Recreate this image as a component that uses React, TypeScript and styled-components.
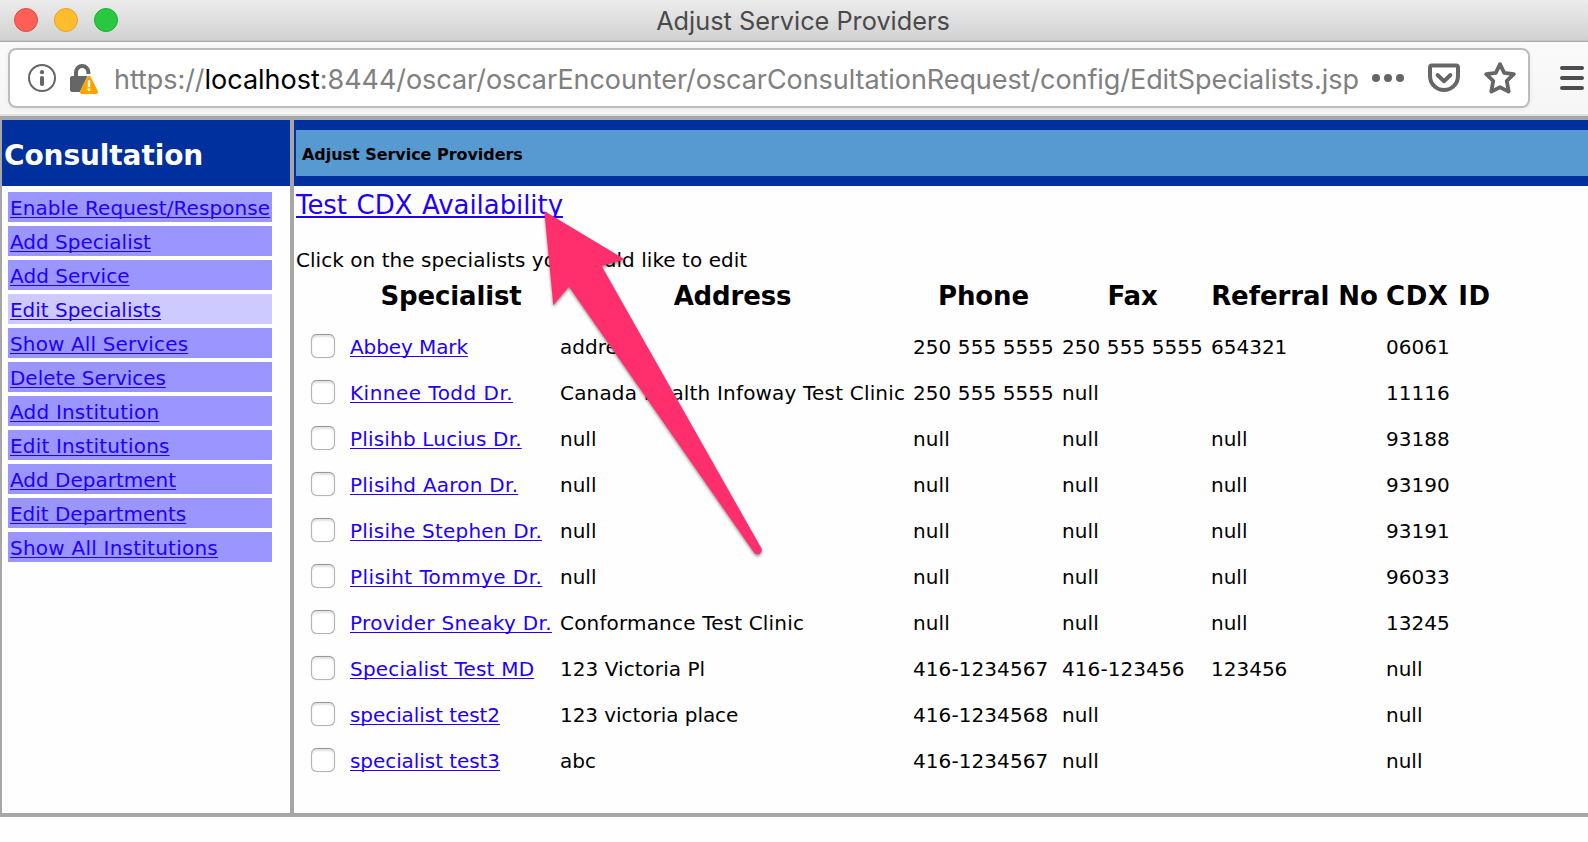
import React from "react";
import styled, { createGlobalStyle } from "styled-components";

const GlobalStyle = createGlobalStyle`
  * { box-sizing: border-box; }
  body {
    margin: 0;
    background: #fefefe;
    overflow: hidden;
    font-family: Verdana, "DejaVu Sans", sans-serif;
  }
`;

const Window = styled.div`
  position: relative;
  width: 1588px;
  height: 842px;
  overflow: hidden;
  display: flex;
  flex-direction: column;
  color: #000;
`;

const TitleBar = styled.header`
  height: 42px;
  flex: none;
  display: grid;
  grid-template-columns: 1fr auto 1fr;
  align-items: center;
  padding: 0 0 0 14px;
  background: linear-gradient(#ececec, #d1d1d1);
  border-bottom: 1px solid #acacac;
  box-shadow: inset 0 -1px #c4c4c4;
`;

const Lights = styled.div`
  display: flex;
  gap: 16px;
  margin-bottom: 1px;
`;

const Light = styled.span<{ $fill: string; $edge: string }>`
  width: 24px;
  height: 24px;
  border-radius: 50%;
  background: ${(p) => p.$fill};
  border: 1px solid ${(p) => p.$edge};
`;

const WindowTitle = styled.h1`
  margin: 1px 0 0 4px;
  font: 400 25.3px/40px Inter, sans-serif;
  color: #4a4a4a;
`;

const Toolbar = styled.div`
  height: 74px;
  flex: none;
  display: flex;
  align-items: flex-start;
  padding: 6px 4px 0 8px;
  background: linear-gradient(#fafafa, #f6f6f6);
  border-bottom: 2px solid #e0e0e0;
`;

const AddressBox = styled.div`
  width: 1522px;
  height: 60px;
  flex: none;
  display: flex;
  align-items: center;
  padding: 0 12px 0 18px;
  background: #fff;
  border: 2px solid #bcbcbc;
  border-radius: 8px;
  box-shadow: 0 1px 5px rgba(0, 0, 0, 0.06);
`;

const Url = styled.div`
  margin-left: 16px;
  padding-top: 3px;
  width: 1258px;
  flex: none;
  white-space: nowrap;
  font: 400 27px/53px Inter, sans-serif;
  letter-spacing: -0.065px;
  color: #808080;
`;

const Host = styled.span`
  color: #000;
  letter-spacing: 0;
`;

const Icon = styled.svg<{ $gap?: number }>`
  flex: none;
  display: block;
  margin-left: ${(p) => p.$gap ?? 0}px;
`;

const Page = styled.main`
  height: 701px;
  flex: none;
  display: grid;
  grid-template-columns: 288px 1fr;
  grid-template-rows: 66px 1fr;
  column-gap: 4px;
  border: solid #a6a6a6;
  border-width: 4px 0 4px 2px;
  background: linear-gradient(#a6a6a6, #a6a6a6) 288px 0 / 4px 100% no-repeat;
`;

const Brand = styled.div`
  padding: 0 0 0 2px;
  background: #002f9e;
  color: #fff;
  font-size: 28px;
  font-weight: bold;
  line-height: 71px;
  height: 66px;
  letter-spacing: -0.1px;
`;

const TopCell = styled.div`
  padding: 10px 0 10px 2px;
  background: #002f9e;
`;

const TopBar = styled.div`
  height: 46px;
  padding-left: 6px;
  background: #5799d1;
  font-size: 16px;
  font-weight: bold;
  line-height: 49px;
  letter-spacing: -0.04px;
`;

const Nav = styled.nav`
  display: flex;
  flex-direction: column;
  gap: 4px;
  padding: 6px 18px 0 6px;
`;

const NavItem = styled.div<{ $current?: boolean }>`
  height: 30px;
  padding-left: 2px;
  line-height: 32px;
  background: ${(p) => (p.$current ? "#cdcaff" : "#9a95ff")};
`;

const Link = styled.a<{ $track?: number; $large?: boolean }>`
  font-size: ${(p) => (p.$large ? 26 : 20)}px;
  letter-spacing: ${(p) => p.$track ?? 0}px;
  word-spacing: ${(p) => (p.$large ? 1.5 : 0)}px;
  white-space: nowrap;
  color: #1f00fc;
  text-decoration: underline;
  text-decoration-thickness: ${(p) => (p.$large ? 2 : 1)}px;
  text-underline-offset: 2px;
  text-decoration-skip-ink: none;
`;

const Content = styled.section`
  padding-left: 2px;
`;

const TestLine = styled.div`
  height: 38px;
  line-height: 38px;
`;

const Hint = styled.p`
  margin: 21px 0 1px;
  font-size: 20px;
  line-height: 30px;
  letter-spacing: 0.04px;
`;

const Row = styled.div`
  display: grid;
  grid-template-columns: 54px 210px 353px 149px 149px 175px 106px;
  height: 46px;
  align-items: center;
`;

const HeadRow = styled(Row)`
  height: 40px;
  margin-bottom: 7px;
`;

const HeadCell = styled.div<{ $track?: number }>`
  padding-right: 8px;
  text-align: center;
  white-space: nowrap;
  font-size: 26px;
  font-weight: bold;
  line-height: 40px;
  letter-spacing: ${(p) => p.$track ?? -0.15}px;
`;

const Cell = styled.div<{ $track?: number }>`
  height: 46px;
  font-size: 20px;
  line-height: 48px;
  white-space: nowrap;
  letter-spacing: ${(p) => p.$track ?? 0}px;
`;

const Check = styled.input`
  appearance: none;
  display: block;
  width: 24px;
  height: 24px;
  margin: 0 0 0 15px;
  border: 1px solid #b4b4b4;
  border-top-color: #979797;
  border-radius: 6px;
  background: #fff;
  box-shadow: inset 0 2px 2px rgba(0, 0, 0, 0.12), 0 0 1px rgba(0, 0, 0, 0.25);
`;

const Pointer = styled.svg`
  position: absolute;
  left: 530px;
  top: 200px;
  filter: drop-shadow(0 2px 1.5px rgba(0, 0, 0, 0.4));
`;

const nav: [string, number][] = [
  ["Enable Request/Response", 0.07],
  ["Add Specialist", 0],
  ["Add Service", 0.05],
  ["Edit Specialists", -0.02],
  ["Show All Services", 0.14],
  ["Delete Services", -0.04],
  ["Add Institution", 0.2],
  ["Edit Institutions", 0.17],
  ["Add Department", 0],
  ["Edit Departments", -0.02],
  ["Show All Institutions", 0.23],
];

interface Specialist {
  name: string;
  track: number;
  address: string;
  addressTrack?: number;
  phone: string;
  fax: string;
  referral: string;
  cdx: string;
}

const specialists: Specialist[] = [
  { name: "Abbey Mark", track: -0.1, address: "address", phone: "250 555 5555", fax: "250 555 5555", referral: "654321", cdx: "06061" },
  { name: "Kinnee Todd Dr.", track: 0.48, address: "Canada Health Infoway Test Clinic", addressTrack: 0.18, phone: "250 555 5555", fax: "null", referral: "", cdx: "11116" },
  { name: "Plisihb Lucius Dr.", track: 0.18, address: "null", phone: "null", fax: "null", referral: "null", cdx: "93188" },
  { name: "Plisihd Aaron Dr.", track: 0.25, address: "null", phone: "null", fax: "null", referral: "null", cdx: "93190" },
  { name: "Plisihe Stephen Dr.", track: 0.2, address: "null", phone: "null", fax: "null", referral: "null", cdx: "93191" },
  { name: "Plisiht Tommye Dr.", track: 0.42, address: "null", phone: "null", fax: "null", referral: "null", cdx: "96033" },
  { name: "Provider Sneaky Dr.", track: 0.32, address: "Conformance Test Clinic", addressTrack: 0.17, phone: "null", fax: "null", referral: "null", cdx: "13245" },
  { name: "Specialist Test MD", track: 0.2, address: "123 Victoria Pl", addressTrack: 0.05, phone: "416-1234567", fax: "416-123456", referral: "123456", cdx: "null" },
  { name: "specialist test2", track: -0.07, address: "123 victoria place", addressTrack: -0.05, phone: "416-1234568", fax: "null", referral: "", cdx: "null" },
  { name: "specialist test3", track: -0.07, address: "abc", phone: "416-1234567", fax: "null", referral: "", cdx: "null" },
];

const InfoIcon = () => (
  <Icon width="28" height="28" viewBox="0 0 28 28">
    <circle cx="14" cy="14" r="13" fill="none" stroke="#666" strokeWidth="2" />
    <circle cx="14" cy="8.2" r="2.1" fill="#666" />
    <rect x="12" y="12" width="4" height="10" rx="1.8" fill="#666" />
  </Icon>
);

const LockIcon = () => (
  <Icon $gap={14} width="28" height="34" viewBox="0 -1 28 34">
    <path d="M6 15V10.2a6.2 6.2 0 0 1 12.4 0V12" fill="none" stroke="#666" strokeWidth="4" />
    <path d="M2 14h18v16H2a2 2 0 0 1-2-2V16a2 2 0 0 1 2-2z" fill="#666" />
    <path d="M19 15L11.6 30.5H27z" fill="#fff" stroke="#fff" strokeWidth="3.6" strokeLinejoin="round" />
    <path d="M19 16L12 30H26z" fill="#ffb400" stroke="#ffa200" strokeWidth="4" strokeLinejoin="round" />
    <path d="M19 19.5v4.5" stroke="#fff" strokeWidth="2.4" strokeLinecap="round" />
    <circle cx="19" cy="27.8" r="1.4" fill="#fff" />
  </Icon>
);

const DotsIcon = () => (
  <Icon width="32" height="32" viewBox="0 0 32 32" fill="#666">
    <circle cx="4" cy="16" r="4" />
    <circle cx="16" cy="16" r="4" />
    <circle cx="28" cy="16" r="4" />
  </Icon>
);

const PocketIcon = () => (
  <Icon $gap={24} width="32" height="32" viewBox="0 0 32 32" fill="none" stroke="#666" strokeWidth="4">
    <path d="M4 3.6H28Q30 3.6 30 5.6V14a14 14 0 0 1-28 0V5.6Q2 3.6 4 3.6Z" />
    <path d="M9.6 13l6.4 6.2 6.4-6.2" strokeLinecap="round" strokeLinejoin="round" />
  </Icon>
);

const StarIcon = () => (
  <Icon $gap={24} width="32" height="32" viewBox="0 0 32 32">
    <path
      d="M16 2.2L20.2 10.9 29.8 12.2 22.8 18.9 24.7 29.6 16 25.2 7.3 29.6 9.2 18.9 2.2 12.2 11.8 10.9Z"
      fill="none"
      stroke="#666"
      strokeWidth="3.8"
      strokeLinejoin="round"
    />
  </Icon>
);

const MenuIcon = () => (
  <Icon $gap={30} width="24" height="60" viewBox="0 0 24 60" stroke="#4d4d4f" strokeWidth="4" strokeLinecap="round">
    <path d="M2 20H22M2 30H22M2 40H22" />
  </Icon>
);

export default function App() {
  return (
    <Window>
      <GlobalStyle />
      <TitleBar>
        <Lights>
          <Light $fill="#ff5f57" $edge="#e24b41" />
          <Light $fill="#ffbd2e" $edge="#e1a325" />
          <Light $fill="#28c940" $edge="#1fae2f" />
        </Lights>
        <WindowTitle>Adjust Service Providers</WindowTitle>
      </TitleBar>
      <Toolbar>
        <AddressBox>
          <InfoIcon />
          <LockIcon />
          <Url>
            https://<Host>localhost</Host>:8444/oscar/oscarEncounter/oscarConsultationRequest/config/EditSpecialists.jsp
          </Url>
          <DotsIcon />
          <PocketIcon />
          <StarIcon />
        </AddressBox>
        <MenuIcon />
      </Toolbar>
      <Page>
        <Brand>Consultation</Brand>
        <TopCell>
          <TopBar>Adjust Service Providers</TopBar>
        </TopCell>
        <Nav>
          {nav.map(([label, track]) => (
            <NavItem key={label} $current={label === "Edit Specialists"}>
              <Link $track={track}>{label}</Link>
            </NavItem>
          ))}
        </Nav>
        <Content>
          <TestLine>
            <Link $large $track={-0.07}>Test CDX Availability</Link>
          </TestLine>
          <Hint>Click on the specialists you would like to edit</Hint>
          <HeadRow>
            <span />
            <HeadCell>Specialist</HeadCell>
            <HeadCell>Address</HeadCell>
            <HeadCell>Phone</HeadCell>
            <HeadCell>Fax</HeadCell>
            <HeadCell $track={-0.06}>Referral No</HeadCell>
            <HeadCell $track={0.6}>CDX ID</HeadCell>
          </HeadRow>
          {specialists.map((s) => (
            <Row key={s.name}>
              <Check type="checkbox" />
              <Cell>
                <Link $track={s.track}>{s.name}</Link>
              </Cell>
              <Cell $track={s.addressTrack}>{s.address}</Cell>
              <Cell $track={0.08}>{s.phone}</Cell>
              <Cell $track={0.08}>{s.fax}</Cell>
              <Cell>{s.referral}</Cell>
              <Cell>{s.cdx}</Cell>
            </Row>
          ))}
        </Content>
      </Page>
      <Pointer width="250" height="370" viewBox="530 200 250 370">
        <path
          d="M544.3 211L625 259.5L601.7 266L761 547.5A4.2 4.2 0 0 1 754 552.6L569 286.7L553.3 305.3Z"
          fill="#ff2f6e"
        />
      </Pointer>
    </Window>
  );
}
